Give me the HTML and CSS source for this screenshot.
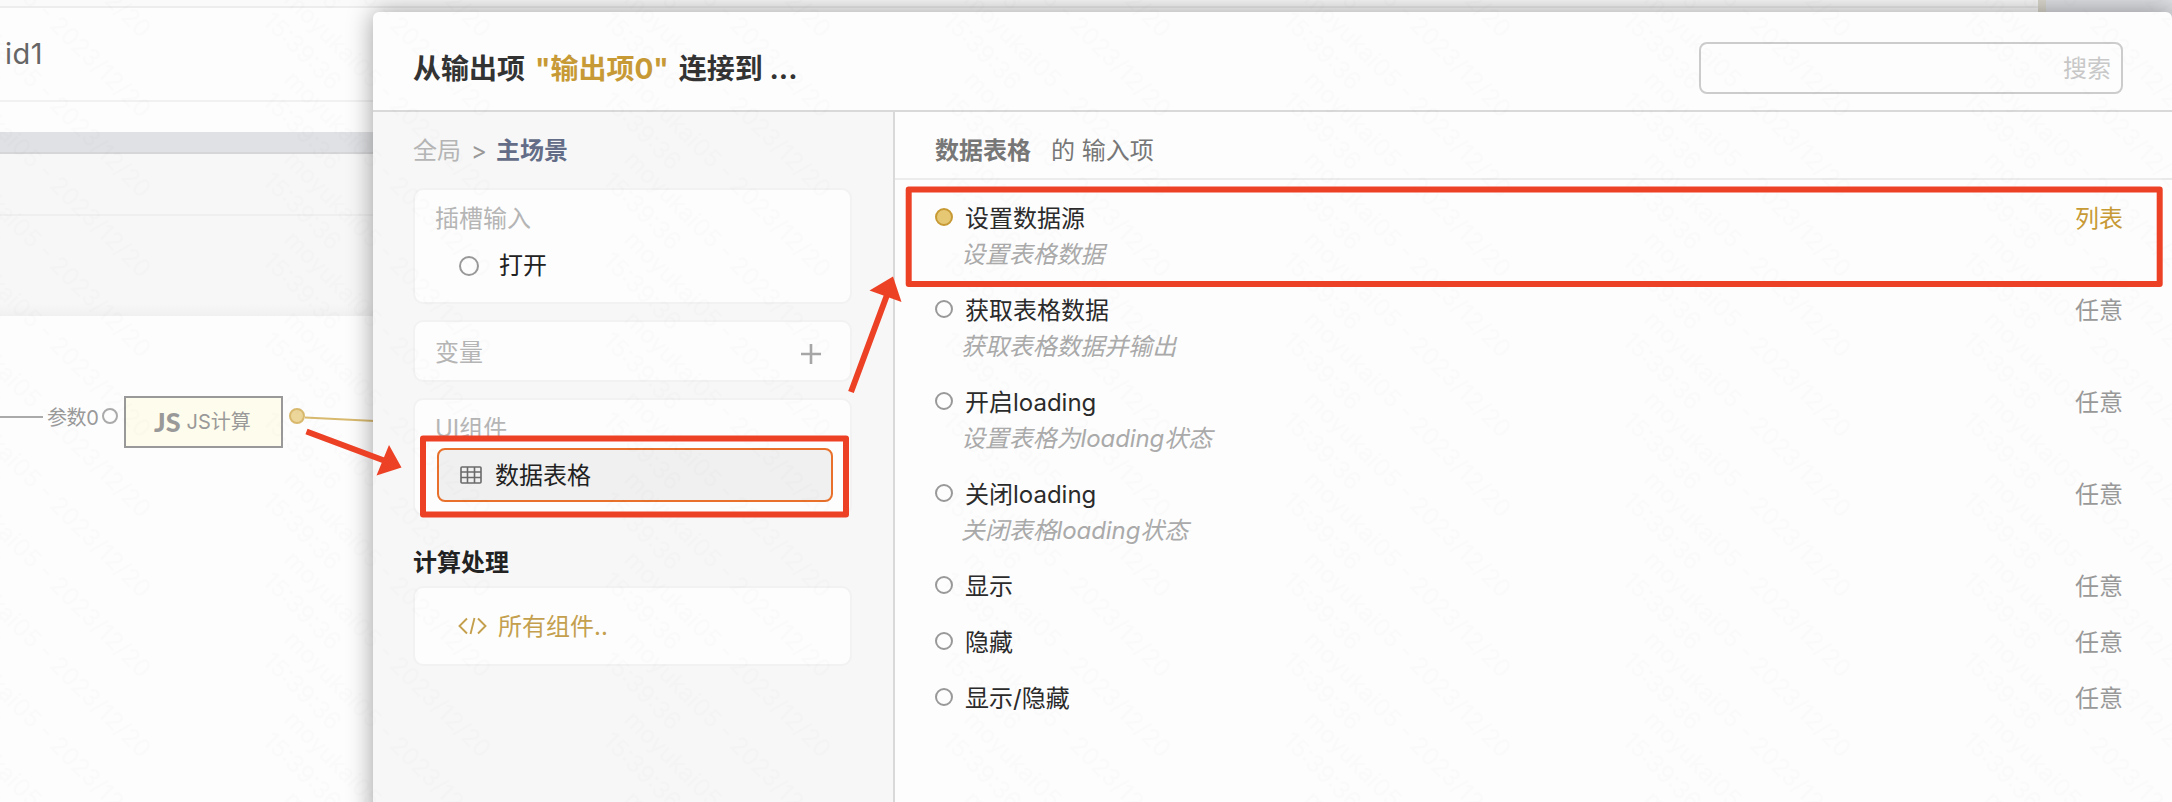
FILE: index.html
```html
<!DOCTYPE html>
<html lang="zh-CN">
<head>
<meta charset="utf-8">
<title>连接到</title>
<link rel="stylesheet" href="styles.css">
</head>
<body>
<div class="app">
  <div class="workspace">
    <div class="topline"><div class="top-main"></div><div class="top-edge"></div><div class="top-side"></div></div>
    <div class="row-title">id1</div>
    <div class="row-empty"></div>
    <div class="band"></div>
    <div class="row-gray-head"></div>
    <div class="row-gray"></div>
    <div class="flow">
      <span class="wire"></span>
      <span class="param">参数0</span>
      <span class="pin"></span>
      <div class="node"><b>JS</b><span>JS计算</span></div>
      <span class="pin pin-on"></span>
      <svg class="out" width="70" height="20" viewBox="0 0 70 20"><path d="M0 10.5 70 14" stroke="#d8b96e" stroke-width="2" fill="none"/></svg>
    </div>
  </div>

  <section class="dialog">
    <header class="dialog-head">
      <h1>从输出项<em>"输出项0"</em>连接到 ...</h1>
      <div class="search">搜索</div>
    </header>
    <div class="dialog-body">
      <aside class="side">
        <nav class="crumbs"><span>全局</span><span class="sep">&gt;</span><b>主场景</b></nav>
        <div class="card card-slot">
          <div class="card-title">插槽输入</div>
          <div class="entry"><i class="ring"></i><span>打开</span></div>
        </div>
        <div class="card card-var">
          <div class="card-title">变量</div>
          <svg width="20" height="20" viewBox="0 0 20 20"><path d="M10 0V20M0 10H20" stroke="#a6a6a6" stroke-width="2.6"/></svg>
        </div>
        <div class="card card-ui">
          <div class="card-title">UI组件</div>
          <div class="chosen">
            <svg width="22" height="18" viewBox="0 0 22 18" fill="none" stroke="#6b6b6b" stroke-width="1.6"><rect x="1" y="1" width="20" height="16" rx="1"/><path d="M1 6H21M1 11.5H21M7.5 1V17M14.5 1V17"/></svg>
            <span>数据表格</span>
          </div>
        </div>
        <h2>计算处理</h2>
        <div class="card card-all">
          <svg width="29" height="18" viewBox="0 0 29 18" fill="none" stroke="#c4a04e" stroke-width="1.9"><path d="M9 1.5 1.5 9 9 16.500M20 1.500 27.500 9 20 16.500M16.500 1 12.500 17"/></svg>
          <span>所有组件..</span>
        </div>
      </aside>
      <main class="main">
        <div class="main-head"><b>数据表格</b><span>的 输入项</span></div>
        <ul class="inputs">
          <li class="on"><i class="dot"></i><div><p>设置数据源</p><p class="desc">设置表格数据</p></div><span class="type">列表</span></li>
          <li><i class="dot"></i><div><p>获取表格数据</p><p class="desc">获取表格数据并输出</p></div><span class="type">任意</span></li>
          <li><i class="dot"></i><div><p>开启loading</p><p class="desc">设置表格为loading状态</p></div><span class="type">任意</span></li>
          <li><i class="dot"></i><div><p>关闭loading</p><p class="desc">关闭表格loading状态</p></div><span class="type">任意</span></li>
          <li><i class="dot"></i><div><p>显示</p></div><span class="type">任意</span></li>
          <li><i class="dot"></i><div><p>隐藏</p></div><span class="type">任意</span></li>
          <li><i class="dot"></i><div><p>显示/隐藏</p></div><span class="type">任意</span></li>
        </ul>
      </main>
    </div>
  </section>

  <svg class="overlay" width="2172" height="802" viewBox="0 0 2172 802">
    <defs>
      <g id="mark" class="mark"><text transform="translate(283 1) rotate(45)"><tspan x="0" y="0" textLength="280">moyukai05 - 2023/12/20</tspan><tspan x="0" y="30" textLength="98">15:39:36</tspan></text></g>
      <pattern id="tile" width="340" height="80" patternUnits="userSpaceOnUse">
        <use href="#mark"/><use href="#mark" y="-80"/><use href="#mark" y="-160"/><use href="#mark" y="-240"/><use href="#mark" y="80"/>
        <use href="#mark" x="-340"/><use href="#mark" x="-340" y="-80"/><use href="#mark" x="-340" y="-160"/><use href="#mark" x="-340" y="-240"/><use href="#mark" x="-340" y="80"/>
      </pattern>
    </defs>
    <rect width="2172" height="802" fill="url(#tile)"/>
    <g fill="none" stroke="#ed4126" stroke-width="6" stroke-linejoin="round">
      <rect x="423" y="438.500" width="423" height="76"/>
      <rect x="908.700" y="189.500" width="1251" height="94.500"/>
      <path d="M306.500 431.500 384 460.500M851 392 887 295"/>
    </g>
    <path fill="#ed4126" d="M401.500 467.500 389 445 376.500 475.500ZM893 276.500 869.500 290.500 901.500 302Z"/>
  </svg>
</div>
</body>
</html>
```
FILE: styles.css
```css
* { box-sizing: border-box; }
body, h1, h2, p, ul { margin: 0; padding: 0; }
body {
  font-family: Inter, "Noto Sans CJK SC", sans-serif;
  font-size: 24px;
  line-height: 36px;
  color: #2b2b2b;
  background: #fdfdfd;
}
.app { position: relative; width: 2172px; height: 802px; overflow: hidden; }

.topline { display: flex; height: 8px; }
.top-main { width: 2038px; background: #fafafa; border-bottom: 2px solid #ededed; }
.top-edge { width: 8px; height: 20px; background: #dcd9cf; }
.top-side { flex: 1; height: 20px; background: #dfe0e4; }
.row-title {
  height: 94px; padding: 28px 0 0 5px;
  font-size: 29px; letter-spacing: .5px; color: #666;
  border-bottom: 2px solid #f1f1f1;
}
.row-empty { height: 30px; }
.band { height: 22px; background: #e0e1e4; border-bottom: 2px solid #d6d6d8; }
.row-gray-head { height: 62px; background: #f7f7f7; border-bottom: 2px solid #efefef; }
.row-gray { height: 100px; background: linear-gradient(#f7f7f7 88%, #f0f0f0); }
.flow {
  display: flex; align-items: center;
  margin-top: 80px; height: 52px;
  font-size: 20px; color: #999;
}
.wire { flex: none; width: 43px; height: 2px; margin-top: -10px; background: #aaa; }
.param { flex: none; width: 54px; padding-left: 4px; margin-top: -9px; letter-spacing: -.4px; white-space: nowrap; }
.pin { flex: none; width: 16px; height: 16px; margin: -12px 6px 0 5px; border: 2px solid #aaa; border-radius: 50%; }
.node {
  display: flex; flex: none; align-items: center; gap: 6px;
  width: 159px; height: 52px; padding-left: 28px;
  background: #fefcec; border: 2px solid #999; white-space: nowrap;
}
.node b { font: 900 27px/36px Lato, sans-serif; }
.pin-on { margin: -12px 0 0 6px; background: #edd69a; border-color: #d8b96e; }
.out { flex: none; margin-top: -11px; }

.dialog {
  position: absolute; left: 373px; top: 12px;
  width: 1799px; height: 900px;
  display: flex; flex-direction: column;
  background: #fdfdfd; border-radius: 6px;
  box-shadow: 0 0 26px rgba(0, 0, 0, .38);
  overflow: hidden;
}
.dialog-head {
  display: flex; justify-content: space-between; align-items: flex-start;
  height: 100px; padding: 30px 49px 0 40px;
  border-bottom: 2px solid #d9d9d9;
}
.dialog-head h1 { padding-top: 9px; font-size: 28px; line-height: 36px; font-weight: 700; color: #333; white-space: pre; }
.dialog-head em { margin: 0 10px; font-style: normal; color: #c79a36; }
.search {
  width: 424px; height: 52px; padding: 7px 10px;
  border: 2px solid #ccc; border-radius: 8px;
  text-align: right; color: #c8c8c8;
}
.dialog-body { display: flex; flex: 1; }
.side {
  width: 522px; padding: 21px 41px 0 40px;
  background: #f7f7f7; border-right: 2px solid #d9d9d9;
}
.crumbs { display: flex; color: #b5b5b5; height: 55px; }
.crumbs .sep { margin: 0 9px 0 10px; color: #999; }
.crumbs b { color: #636d87; }
.card {
  width: 439px; margin-bottom: 16px;
  background: #fdfdfd; background-clip: padding-box;
  border: 2px solid #f2f2f2; border-radius: 10px;
}
.card-title { color: #b5b5b5; }
.card-slot { height: 116px; padding: 11px 20px; }
.entry { display: flex; align-items: center; gap: 20px; padding: 11px 0 0 24px; color: #222; }
.ring { width: 20px; height: 20px; border: 2px solid #999; border-radius: 50%; }
.card-var { display: flex; justify-content: space-between; height: 62px; padding: 13px 29px 0 20px; }
.card-var svg { margin-top: 9px; }
.card-ui { height: 118px; padding: 11px 17px 0 22px; }
.card-ui .card-title { height: 37px; margin-left: -2px; }
.chosen {
  display: flex; align-items: center; gap: 13px;
  height: 54px; padding-left: 21px;
  color: #222; background: #f0f0f0;
  border: 2px solid #e8702a; border-radius: 8px;
}
.chosen span, .card-all span { padding-top: 2px; }
.side h2 { height: 54px; padding-top: 13px; font-size: 24px; line-height: 36px; color: #222; }
.card-all { display: flex; align-items: center; gap: 11px; height: 80px; padding-left: 43px; color: #c4a04e; }

.main { flex: 1; }
.main-head { height: 68px; padding: 21px 0 0 40px; color: #777; border-bottom: 2px solid #ececec; }
.main-head span { margin-left: 20px; }
.inputs { list-style: none; padding: 21px 49px 0 40px; }
.inputs li { display: flex; align-items: flex-start; padding-bottom: 20px; }
.inputs div { flex: 1; padding-left: 12px; }
.dot { width: 18px; height: 18px; margin-top: 7px; border: 2px solid #999; border-radius: 50%; }
.inputs .on .dot { background: #e5c774; border-color: #c79a36; }
.inputs .desc { margin-left: -4px; font-style: italic; letter-spacing: -.1px; color: #aaa; }
.type { color: #999; }
.on .type { color: #c79a36; }

.overlay { position: absolute; left: 0; top: 0; }
.mark { font-size: 24px; fill: #000; fill-opacity: .011; }
```
